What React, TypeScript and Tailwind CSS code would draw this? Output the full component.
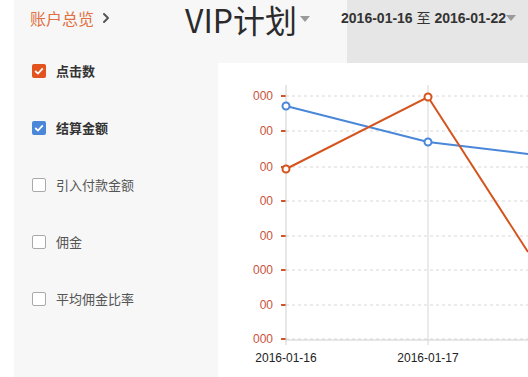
import { ChevronRight } from "lucide-react";

const metrics = [
  { label: "点击数", checked: true, color: "bg-[#e2531e]" },
  { label: "结算金额", checked: true, color: "bg-[#4a87d9]" },
  { label: "引入付款金额", checked: false, color: "" },
  { label: "佣金", checked: false, color: "" },
  { label: "平均佣金比率", checked: false, color: "" },
];

const gridY = [33, 68, 104, 138, 173, 207, 242, 276];
const tickLabels = ["000", "00", "00", "00", "00", "000", "00", "000"];

function Caret() {
  return (
    <svg width="10" height="6" viewBox="0 0 10 6" className="shrink-0">
      <path d="M0 0 L10 0 L5 6 Z" fill="#9a9a9a" />
    </svg>
  );
}

function Checkbox({ checked, color }: { checked: boolean; color: string }) {
  if (!checked) {
    return <span className="w-[14px] h-[14px] rounded-[2px] border border-[#a9a9a9] bg-white shrink-0" />;
  }
  return (
    <span className={`w-[14px] h-[14px] rounded-[2px] ${color} flex items-center justify-center shrink-0`}>
      <svg width="10" height="8" viewBox="0 0 10 8">
        <path d="M1.2 4 L4 6.6 L8.8 1.4" fill="none" stroke="white" strokeWidth="1.8" />
      </svg>
    </span>
  );
}

function Chart() {
  return (
    <svg width="310" height="314" viewBox="0 0 310 314" className="block">
      {gridY.map((y, i) => (
        <g key={y}>
          <line x1="68" x2="310" y1={y} y2={y} stroke="#d8d8d8" strokeDasharray="3 3" />
          <line x1="63" x2="68" y1={y} y2={y} stroke="#d0532a" strokeWidth="2" />
          <text
            x="55"
            y={y + 4}
            textAnchor="end"
            fontSize="12"
            fill="#c9533c"
            fontFamily="'Liberation Sans', Arial, sans-serif"
          >
            {tickLabels[i]}
          </text>
        </g>
      ))}
      <line x1="68" x2="68" y1="22" y2="282" stroke="#cfcfcf" />
      <line x1="210" x2="210" y1="22" y2="282" stroke="#d6d6d6" />
      <line x1="68" x2="310" y1="277" y2="277" stroke="#cfcfcf" />
      <text x="68" y="299" textAnchor="middle" fontSize="12" fill="#222" fontFamily="'Liberation Sans', Arial, sans-serif">
        2016-01-16
      </text>
      <text x="210" y="299" textAnchor="middle" fontSize="12" fill="#222" fontFamily="'Liberation Sans', Arial, sans-serif">
        2016-01-17
      </text>
      <polyline points="68,43 210,79 310,91" fill="none" stroke="#4a87d9" strokeWidth="2" />
      <polyline points="68,106 210,34 310,189" fill="none" stroke="#d5541e" strokeWidth="2" />
      <circle cx="68" cy="43" r="3.5" fill="white" stroke="#4a87d9" strokeWidth="2" />
      <circle cx="210" cy="79" r="3.5" fill="white" stroke="#4a87d9" strokeWidth="2" />
      <circle cx="68" cy="106" r="3.5" fill="white" stroke="#d5541e" strokeWidth="2" />
      <circle cx="210" cy="34" r="3.5" fill="white" stroke="#d5541e" strokeWidth="2" />
    </svg>
  );
}

export default function App() {
  return (
    <div
      className="w-[528px] h-[377px] overflow-hidden bg-white flex"
      style={{ fontFamily: "'Noto Sans CJK SC', 'Liberation Sans', sans-serif" }}
    >
      <div className="w-[14px] shrink-0 bg-white" />
      <div className="flex-1 flex flex-col bg-[#f7f7f7]">
        <header className="h-[63px] flex items-start shrink-0">
          <div className="flex items-center pl-[16px] pt-[6px] w-[171px] shrink-0">
            <span className="text-[16px] leading-[24px] text-[#e0703f]">账户总览</span>
            <ChevronRight className="w-4 h-4 ml-[4px] text-[#555]" strokeWidth={3} />
          </div>
          <div className="flex items-center gap-[3px] shrink-0">
            <span className="text-[32px] leading-[38px] text-[#2b2b2b] whitespace-nowrap">VIP计划</span>
            <Caret />
          </div>
          <div className="flex-1 h-full ml-[37px] bg-[#e6e6e6] flex items-start pt-[8px]">
            <span
              className="text-[14px] font-bold leading-[20px] text-[#333] -ml-[6px] whitespace-nowrap"
              style={{ fontFamily: "'Liberation Sans', 'Noto Sans CJK SC', sans-serif" }}
            >
              2016-01-16 <span className="font-normal">至</span> 2016-01-22
            </span>
            <span className="mt-[7px]">
              <Caret />
            </span>
          </div>
        </header>
        <div className="flex flex-1">
          <aside className="w-[204px] shrink-0 pt-[1px] pl-[18px]">
            {metrics.map((m) => (
              <div key={m.label} className="h-[57px] flex items-start gap-[10px]">
                <Checkbox checked={m.checked} color={m.color} />
                <span
                  className={`text-[13px] leading-[14px] ${m.checked ? "font-bold text-[#333]" : "text-[#555]"}`}
                >
                  {m.label}
                </span>
              </div>
            ))}
          </aside>
          <main className="flex-1 bg-white">
            <Chart />
          </main>
        </div>
      </div>
    </div>
  );
}
